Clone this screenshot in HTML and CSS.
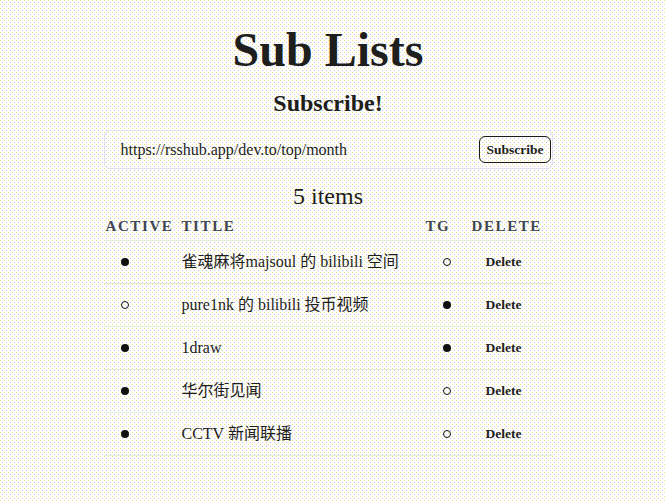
FILE: index.html
```html
<!DOCTYPE html>
<html lang="zh-CN">
<head>
<meta charset="utf-8">
<title>Sub Lists</title>
<link rel="stylesheet" href="styles.css">
</head>
<body>
<main class="page">
  <h1 class="title">Sub Lists</h1>
  <h2 class="subtitle">Subscribe!</h2>
  <form class="sub-form">
    <input class="sub-input" type="text" value="https://rsshub.app/dev.to/top/month">
    <button class="sub-btn" type="button">Subscribe</button>
  </form>
  <div class="count">5 items</div>
  <div class="table">
    <div class="row head">
      <div class="cell c-active">Active</div>
      <div class="cell c-title">Title</div>
      <div class="cell c-tg">TG</div>
      <div class="cell c-del">Delete</div>
    </div>
    <div class="row">
      <div class="cell c-active"><span class="dot on"></span></div>
      <div class="cell c-title">雀魂麻将majsoul 的 bilibili 空间</div>
      <div class="cell c-tg"><span class="dot off"></span></div>
      <div class="cell c-del"><span class="del">Delete</span></div>
    </div>
    <div class="row">
      <div class="cell c-active"><span class="dot off"></span></div>
      <div class="cell c-title">pure1nk 的 bilibili 投币视频</div>
      <div class="cell c-tg"><span class="dot on"></span></div>
      <div class="cell c-del"><span class="del">Delete</span></div>
    </div>
    <div class="row">
      <div class="cell c-active"><span class="dot on"></span></div>
      <div class="cell c-title">1draw</div>
      <div class="cell c-tg"><span class="dot on"></span></div>
      <div class="cell c-del"><span class="del">Delete</span></div>
    </div>
    <div class="row">
      <div class="cell c-active"><span class="dot on"></span></div>
      <div class="cell c-title">华尔街见闻</div>
      <div class="cell c-tg"><span class="dot off"></span></div>
      <div class="cell c-del"><span class="del">Delete</span></div>
    </div>
    <div class="row">
      <div class="cell c-active"><span class="dot on"></span></div>
      <div class="cell c-title">CCTV 新闻联播</div>
      <div class="cell c-tg"><span class="dot off"></span></div>
      <div class="cell c-del"><span class="del">Delete</span></div>
    </div>
  </div>
</main>
</body>
</html>
```

FILE: styles.css
```css
html, body {
  margin: 0;
  padding: 0;
}

body {
  background-color: #ffffff;
  background-image:
    conic-gradient(from 0deg at 1px 1px, transparent 75%, #efe77a 0),
    conic-gradient(from 0deg at 1px 1px, transparent 75%, #c8c6f0 0);
  background-size: 4px 4px, 4px 4px;
  background-position: 0 0, 2px 2px;
  font-family: "Liberation Serif", "Noto Sans CJK SC", serif;
  color: #1e1e1c;
  min-height: 502px;
}

.page {
  width: 449px;
  margin: 0 auto;
  padding: 22px 9px 0 0;
  box-sizing: content-box;
}

.title {
  margin: 0;
  font-size: 48px;
  line-height: 56px;
  font-weight: bold;
  text-align: center;
}

.subtitle {
  margin: 11px 0 0;
  font-size: 24px;
  line-height: 28px;
  font-weight: bold;
  text-align: center;
}

.sub-form {
  margin: 13px 0 0;
  display: flex;
  align-items: center;
  border: 1px solid #dde0e6;
  border-radius: 6px;
  padding: 5px 1px 5px 16px;
}

.sub-input {
  flex: 1;
  min-width: 0;
  border: none;
  outline: none;
  background: transparent;
  padding: 0;
  font-family: "Liberation Serif", serif;
  font-size: 16px;
  color: #1e1e1c;
  height: 27px;
}

.sub-btn {
  height: 27px;
  padding: 0 6px;
  border: 1px solid #1a1a1a;
  border-radius: 6px;
  background: transparent;
  font-family: "Liberation Serif", serif;
  font-weight: bold;
  font-size: 13.5px;
  color: #1e1e1c;
}

.count {
  margin-top: 13px;
  font-size: 24px;
  line-height: 28px;
  text-align: center;
}

.row {
  display: grid;
  grid-template-columns: 76px 244px 46px 1fr;
  height: 42px;
  align-items: center;
  border-bottom: 1px solid #e3eed6;
}

.row.head {
  height: auto;
  padding: 8px 0 5px;
  align-items: start;
}

.head .cell {
  font-size: 15px;
  line-height: 17px;
  font-weight: bold;
  text-transform: uppercase;
  letter-spacing: 1.6px;
  color: #3f4553;
  padding-left: 2px;
}

.cell {
  font-size: 16px;
  line-height: 20px;
  display: flex;
  align-items: center;
}

.row:not(.head) .c-active { padding-left: 17px; }
.row:not(.head) .c-title { padding-left: 2px; }
.row:not(.head) .c-tg { padding-left: 19px; }
.row:not(.head) .c-del { padding-left: 16px; }

.dot {
  display: block;
  width: 8px;
  height: 8px;
  border-radius: 50%;
  box-sizing: border-box;
}

.dot.on {
  background: #111111;
}

.dot.off {
  border: 1px solid #111111;
}

.del {
  font-weight: bold;
  font-size: 13.5px;
  color: #1e1e1c;
}
```
